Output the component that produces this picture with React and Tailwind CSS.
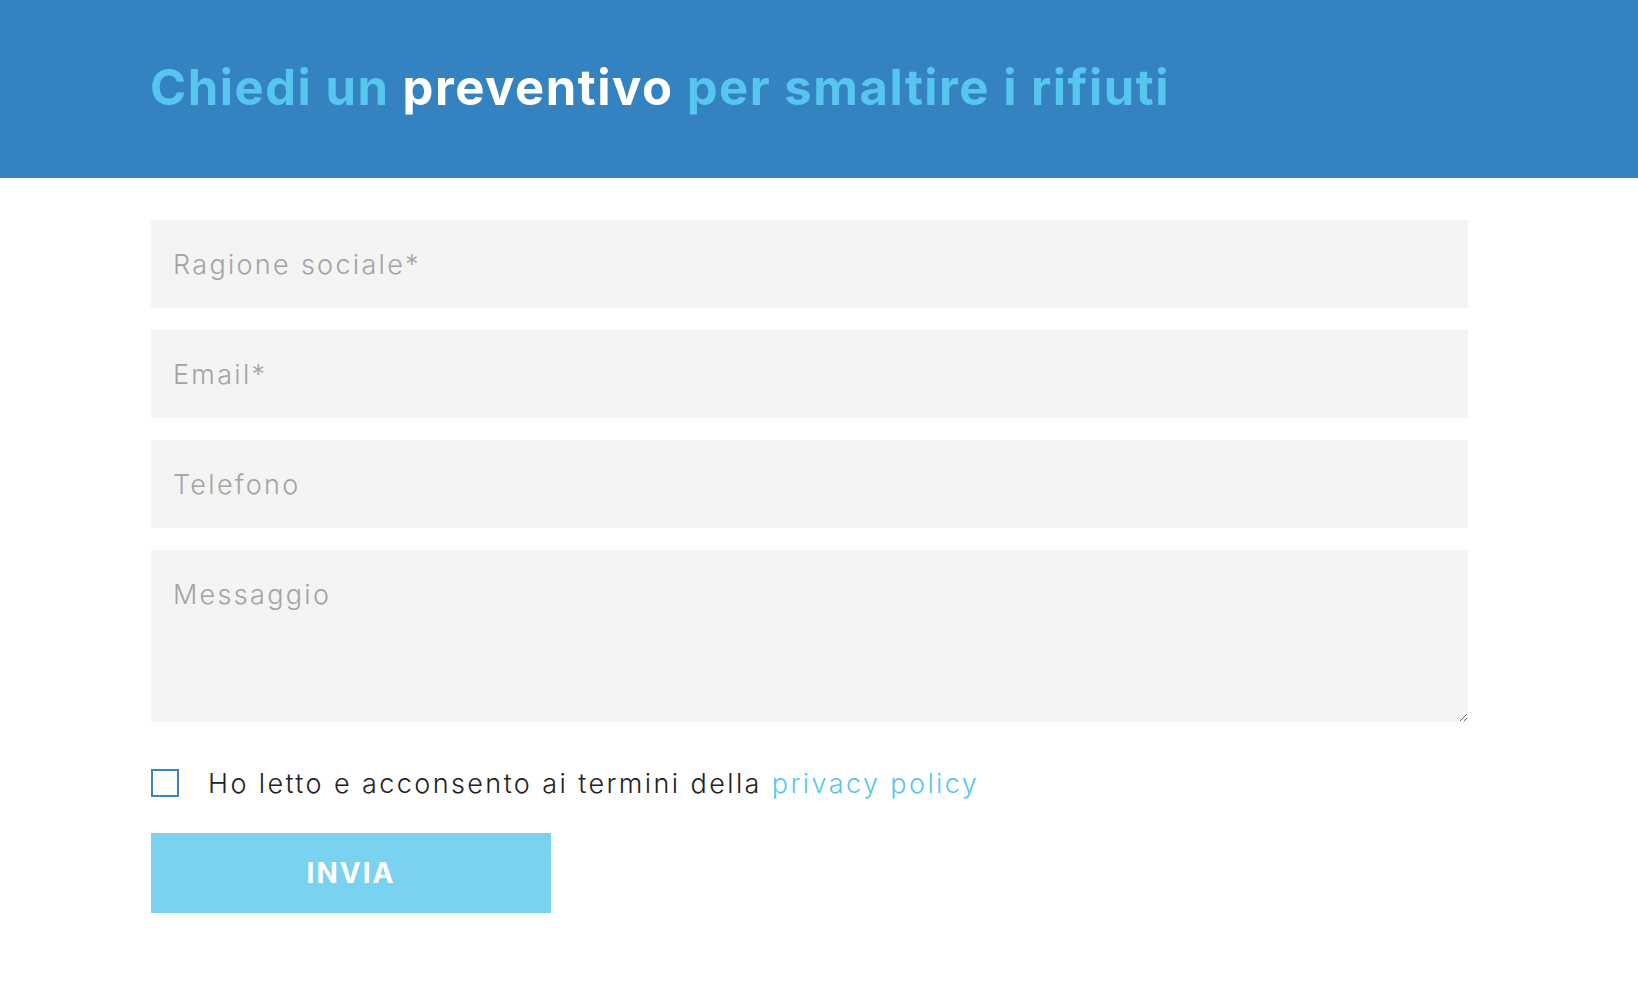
export default function App() {
    const fields = ['Ragione sociale*', 'Email*', 'Telefono'];

    return (
        <div className="min-h-screen bg-white font-['Inter',sans-serif]">
            {/* Header */}
            <header className="h-[178px] bg-[#3582c1] flex items-center px-[150px] pb-[4px]">
                <h1 className="text-[49px] font-bold tracking-[1.5px] leading-none text-[#56c6ef]">
                    Chiedi un <span className="text-white">preventivo</span> per smaltire i rifiuti
                </h1>
            </header>

            {/* Form */}
            <form className="pt-[42px] pl-[151px] pr-[170px] flex flex-col" onSubmit={(e) => e.preventDefault()}>
                <div className="flex flex-col gap-[22px]">
                    {fields.map((f) => (
                        <input
                            key={f}
                            type="text"
                            placeholder={f}
                            className="h-[88px] w-full bg-[#f4f4f4] px-[22px] text-[27px] tracking-[2.3px] font-light text-[#333] placeholder:text-[#a3a3a3] outline-none"
                        />
                    ))}
                    <textarea
                        placeholder="Messaggio"
                        className="h-[172px] w-full bg-[#f4f4f4] px-[22px] pt-[25px] text-[27px] tracking-[2.3px] leading-[40px] font-light text-[#333] placeholder:text-[#a3a3a3] outline-none"
                    />
                </div>

                {/* Privacy */}
                <label className="mt-[47px] flex items-center gap-[29px] cursor-pointer">
                    <input
                        type="checkbox"
                        className="appearance-none w-[28px] h-[28px] border-2 border-[#3a84c4] bg-white shrink-0"
                    />
                    <span className="text-[27px] tracking-[2.4px] font-light text-[#222] leading-none">
                        Ho letto e acconsento ai termini della{' '}
                        <a href="#" className="text-[#56c6ef]">privacy policy</a>
                    </span>
                </label>

                <button
                    type="submit"
                    className="mt-[36px] w-[400px] h-[80px] bg-[#79d3f0] text-white text-[28px] tracking-[2px] font-bold"
                >
                    INVIA
                </button>
            </form>
        </div>
    );
}
